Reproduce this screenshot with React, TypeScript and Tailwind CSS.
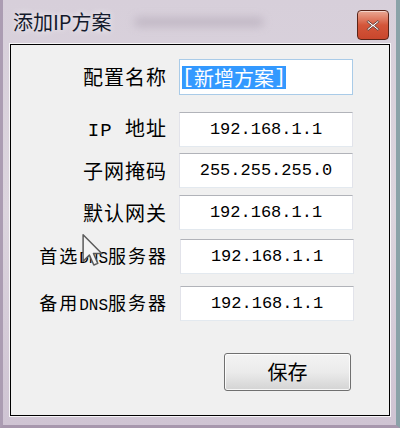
import React from "react";

const cjk = { fontFamily: '"Noto Sans CJK SC", "Noto Sans", sans-serif' };
const mono = { fontFamily: '"Liberation Mono", "Noto Sans CJK SC", monospace' };

const rows = [
  { label: "IP 地址", value: "192.168.1.1", mt: "mt-[17px]" },
  { label: "子网掩码", value: "255.255.255.0", mt: "mt-[6px]" },
  { label: "默认网关", value: "192.168.1.1", mt: "mt-[7px]" },
  { label: "首选DNS服务器", value: "192.168.1.1", mt: "mt-[9px]" },
  { label: "备用DNS服务器", value: "192.168.1.1", mt: "mt-[12px]" },
];

const Label = ({ text }: { text: string }) => {
  if (text.includes("DNS")) {
    const [a, b] = text.split("DNS");
    return (
      <div className="w-[157px] shrink-0 text-right text-[18px] leading-none tracking-[2px] text-black" style={cjk}>
        {a}
        <span className="text-[16px] tracking-[0px]" style={mono}>DNS</span>
        {b}
      </div>
    );
  }
  if (text.startsWith("IP")) {
    return (
      <div className="w-[156px] shrink-0 text-right text-[20px] leading-none tracking-[1px] text-black" style={cjk}>
        <span className="text-[19px]" style={mono}>IP </span>
        地址
      </div>
    );
  }
  return (
    <div className="w-[156px] shrink-0 text-right text-[20px] leading-none tracking-[1px] text-black" style={cjk}>
      {text}
    </div>
  );
};

const CloseButton = () => (
  <div className="w-[32px] h-[30px] rounded-[4px] border border-[#5a2418] bg-gradient-to-b from-[#e9a894] via-[#d4563a] to-[#c9462c] flex items-center justify-center shadow-[inset_0_1px_0_rgba(255,255,255,0.5)]">
    <svg width="14" height="13" viewBox="0 0 14 13">
      <path
        d="M2 1.5 L7 5.5 L12 1.5 L13 2.8 L8.6 6.5 L13 10.2 L12 11.5 L7 7.5 L2 11.5 L1 10.2 L5.4 6.5 L1 2.8 Z"
        fill="#ffffff"
        stroke="#5b3a33"
        strokeWidth="0.9"
        strokeLinejoin="round"
      />
    </svg>
  </div>
);

const Cursor = () => (
  <svg
    className="absolute left-[79px] top-[234px]"
    width="22"
    height="33"
    viewBox="0 0 13 20"
  >
    <path
      d="M0.5 0.5 L0.5 16.5 L4.3 12.8 L7 18.8 L9.4 17.8 L6.8 11.8 L11.8 11.8 Z"
      fill="#f4f4f4"
      stroke="#5a5a5a"
      strokeWidth="0.9"
      strokeLinejoin="round"
    />
  </svg>
);

export default function App() {
  return (
    <div className="relative w-[400px] h-[428px] overflow-hidden bg-gradient-to-b from-[#d7cfda] via-[#dcd5de] to-[#cfc4d3] border-l-[3px] border-l-[#ab9cb2] border-r-[4px] border-r-[#8aa2a8] border-b-[3px] border-b-[#a797ad]">
      {/* title bar */}
      <div className="h-[44px] flex items-start justify-between pl-[10px] pr-[7px]">
        <div className="flex items-center pt-[12px]">
          <span className="text-[20px] leading-none text-[#141a2c] [text-shadow:0_0_6px_rgba(255,255,255,0.9)]" style={cjk}>
            添加IP方案
          </span>
          <div className="ml-[22px] w-[130px] h-[10px] rounded-full bg-[#b9afbd] blur-[4px] opacity-70" />
        </div>
        <div className="pt-[10px]">
          <CloseButton />
        </div>
      </div>

      {/* client area */}
      <div className="ml-[7px] w-[380px] h-[372px] border border-black bg-[#f0f0f0] shadow-[0_0_0_1px_rgba(255,255,255,0.8)]">
        <div className="flex items-center mt-[14px] h-[36px]">
          <Label text="配置名称" />
          <div className="ml-[12px] w-[174px] h-[36px] border border-[#a9cbe8] bg-white flex items-center pl-[2px]">
            <span className="bg-[#3399ff] text-white text-[20px] leading-[23px] h-[23px] flex items-center" style={cjk}>
              <span style={mono}>[</span>新增方案<span style={mono}>]</span>
            </span>
          </div>
        </div>

        {rows.map((r) => (
          <div key={r.label} className={`flex items-center h-[35px] ${r.mt}`}>
            <Label text={r.label} />
            <div className="ml-[12px] w-[174px] h-[35px] border border-t-[#b1b3b9] border-x-[#e2e3ea] border-b-[#e3e9ef] bg-white flex items-center justify-center">
              <span className="text-[17px] leading-none text-black" style={mono}>
                {r.value}
              </span>
            </div>
          </div>
        ))}

        <div className="flex justify-end pr-[38px] mt-[32px]">
          <button
            className="w-[127px] h-[38px] rounded-[3px] border border-[#707070] bg-gradient-to-b from-[#f3f3f3] via-[#ebebeb] to-[#d4d4d4] shadow-[inset_0_0_0_1px_rgba(255,255,255,0.8)] text-[20px] leading-none text-black"
            style={cjk}
          >
            保存
          </button>
        </div>
      </div>

      <Cursor />
    </div>
  );
}
